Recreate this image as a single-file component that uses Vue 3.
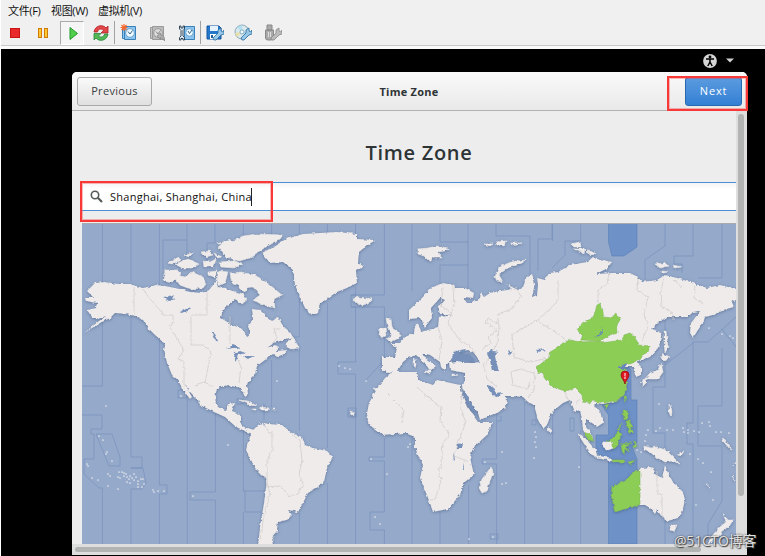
<script setup>
const zoneLines = [
  'M102.4 223V386H82M82 415H102V429H91V434H94V459H84V474L99 488H102.4V544',
  'M131 223V282M131 316V457H142V468H131M131 489V544M131 468H143L146 483L142 489H131',
  'M96 434H112L120 457V466H109Z',
  'M159.4 223V285M159.4 337V485H167V494H159.4V544',
  'M187 223V262M163 269V240H187M178 390H187V398H178Z M187.3 399V544',
  'M215 223V243H207V262M215.4 414V492H190V500H215.4V544',
  'M243.4 223V236M243.4 430V491H266M245 491V512H264M243.4 512V544M237 399H243V404H237Z',
  'M271.6 223V235M271.6 360V407M264 404V420',
  'M299.4 223V234M299.4 299V337H293M299.4 349V431M299.4 513V544',
  'M327.4 223V232M327.4 303V448M327.4 483V544',
  'M355.6 223V234M355.6 287V295H351V307H355.6V362H338V374H355.6V544M348 408H356V417H348Z',
  'M384.4 223V295H351M351 307H384.4V360L365 381M384.4 438V457H369V461H384.4V512H370V530H384.4V544',
  'M412 223V291M412 436V544M440 223V242H468M468 223V294M440 285V265H468M440 512V544',
  'M468.6 485V544M496.6 412V421H501V416M496.6 421V459H482V464H496.6V544M490 534H498V539H490Z',
  'M496 223V236H530V275M538 271V239H552V223M524.6 402V544M532 420H536V425H532Z',
  'M580.6 223V241H565V255L552 268M552.6 223V241M552.6 415V544M580.6 430V544M570 418H574V431H570Z',
  'M665 223V246L645 260V282M693 223V256H674V264H682V273M722 223V278H698',
  'M665 318V387H653V433H665V451M693 342V423H687V444H693V544M693 342H708L736 317',
  'M722 329L736 347M722 348V406H698V446H722V501L708 524V544M665 365L693 343M665 521V544'
]

const zoneBorders = [
  'M134 287V315M143 289L150 299L160 310L163 315H173V323L169 326L176 337L184 350L178 359L184 361V387M207 291V315H191V345H204L211 352L205 383M230 317V344M236 355L241 367L239 383M195 385L204 382L213 386M272 344L277 338L274 329H280',
  'M264 426L269 432H272V451L267 461V481M266 487L280 486L289 496L298 494L303 484L299 474L302 461L300 440L292 435M267 481L270 494L263 520L261 541',
  'M443 287L441 306L453 314M453 285L454 306L448 323L458 338L470 347L475 353M438 327L442 342L439 360M515 287L521 296L510 310L497 314L499 325L488 318L486 322L497 330L489 337L491 344L482 349M499 325L498 342L485 365M537 321L558 301V280M537 320L512 335L514 357L530 362L548 358M539 322L560 335L568 342M535 374L521 369L511 372L513 385L528 389L530 379',
  'M386 392L404 410L402 423M417 387L428 397L441 407L440 422L450 434L443 443L441 463L438 476L442 478M462 387L461 411L466 422L459 440L454 456L469 462M442 478L435 499L430 500M483 363L487 379L497 387M535 374L534 390L528 398',
  'M609 273L607 284L598 290V303M638 277L637 290L648 297L644 314L648 326L642 341M664 277L661 292L662 307L673 313V319M695 285L694 298L703 304M657 471V494H662V517M674 279L681 287M564 391L570 403M580 399L576 404'
]

const continents = [
  'M87 291L95 283L105 282L118 284L130 284L143 288L156 285L165 286L180 289L190 292L202 293L209 290L213 285L216 280L218 287L225 288L235 292L236 298L228 305L222 312L221 318L232 325L243 329L247 337L250 335L248 326L253 320L252 309L260 310L267 317L272 321L278 317L283 326L290 332L293 337L283 340L274 343L267 348L275 345L279 347L276 351L287 350L284 354L277 357L273 354L265 360L257 366L255 375L248 382L247 385L248 394L245 396L241 388L228 385L217 388L215 398L218 407L225 411L228 404L235 403L232 411L240 414L240 423L244 427L253 430L252 434L245 431L236 427L225 417L214 412L200 405L198 400L190 392L184 383L192 397L190 399L183 390L178 380L172 375L167 363L164 350L165 344L155 335L148 328L143 320L135 316L125 314L115 313L110 318L100 323L84 333L99 321L106 316L98 319L92 317L87 310L96 308L97 303L86 301L85 298L94 298Z',
  'M252 431L258 425L263 422L268 424L282 425L292 433L302 437L305 445L313 448L327 451L333 457L327 468L324 482L318 487L308 493L303 503L298 512L288 510L292 515L287 520L278 522L277 531L272 537L273 546H258L260 527L264 503L267 480L255 468L246 450L248 442Z',
  'M262 253L273 247L286 239L303 234L337 232L357 234L357 239L375 240L367 246L359 252L358 263L363 267L356 271L357 283L347 288L337 292L328 298L320 303L318 313L312 315L305 308L300 297L295 285L293 270L283 262L270 263L265 257Z',
  'M443 283L453 285L455 288L465 288L474 293L473 298L463 297L467 303L473 303L480 298L481 293L484 297L490 293L500 291L512 289L506 284L518 290L524 286L525 278L532 274L535 283L532 297L537 295L538 285L537 278L545 280L549 273L558 272L570 265L587 262L593 257L600 260L611 263L608 268L596 274L613 273L630 273L638 277L642 282L657 280L665 275L677 278L693 283L707 288L720 285L736 289V300L732 302L734 307L723 310L713 315L705 317L703 323L698 330L693 338L690 333L691 323L700 311L693 312L688 317L667 317L658 323L652 329L660 332L662 338L658 348L650 357L638 362L641 368V375L636 377L633 367L618 367L627 370L623 373L627 382L624 395L613 402L603 404L597 403L594 406L602 414L603 423L597 427L592 423L586 419V427L592 435L594 441L588 438L583 430L582 420L580 410L575 412L570 400L563 403L552 412L547 425L543 429L538 420L534 405L528 402L523 397L512 396L503 396L508 402L503 410L480 420L478 413L463 390L462 387L465 380V373L450 370L449 363L457 362L472 363L480 362L475 354L468 350L460 352L455 352L451 361L446 365V372L441 367L440 362L430 355L422 353L424 357L436 366L430 371L425 363L416 355L408 358L403 362L397 372L387 373L382 370V357L395 357L397 348L390 343L400 343L405 337L414 333L415 325L418 323L421 332L438 327L439 317L453 315L440 314L438 307L445 300L440 298L431 308L432 318L425 327L420 318L409 319L409 310L422 298L432 287Z',
  'M385 378L393 372L417 372L419 380L433 385L437 380L460 385L460 390L467 407L478 422L493 422L487 435L473 448L470 457L474 475L463 483L460 495L448 509L433 512L428 498L420 478L423 465L415 448V437L405 433L383 435L372 427L368 422L367 413L369 403L378 387Z',
  'M638 472L642 468L650 467L655 468L653 473L662 478L665 465L668 473L673 482L683 492L685 500L682 513L678 518L668 521L662 517L657 510L655 514L650 508L645 505L638 505Z'
]

const islands = [
  'M218 247L225 242L235 240L243 236L257 234L283 235L280 239L266 247L258 252L250 258L239 261L226 257Z',
  'M230 273L241 272L255 275L270 285L282 295L274 299L275 308L263 305L253 300L260 295L253 287L243 288L232 283Z',
  'M177 275L185 277L192 272L203 277L206 284L203 288L190 289L180 285L176 280Z',
  'M165 270L177 270L181 274L173 282L163 280Z M175 264L188 259L199 264L194 268L182 268Z M168 263L179 257L181 260L172 264Z M184 255L193 253L189 257Z',
  'M201 252L209 251L213 255L206 257Z M203 261L210 262L216 259L214 266L204 266Z M208 272L217 271L215 277L208 275Z M219 271L228 272L225 283L219 286L216 280Z M219 262L235 261L243 264L234 268L221 267Z M214 253L222 257L217 258Z M217 244L231 240L228 244Z M233 291L243 294L247 300L242 304L235 299Z M237 284L248 286L245 292L240 289Z',
  'M353 299L358 297L365 298L372 299L368 304L362 306L356 303Z',
  'M287 341L293 337L299 348L292 349L287 347Z',
  'M386 318L391 319L392 327L399 332L401 337L391 342L387 339L392 335L388 329Z M380 329L386 328L387 335L382 338L379 334Z',
  'M418 249L428 248L437 246L448 248L445 251L437 252L442 257L435 257L429 261L424 256L418 254Z',
  'M495 277L499 267L511 262L526 260L522 263L506 269L499 275L503 282L497 281Z',
  'M484 244L493 244L490 246Z M496 242L506 241L504 246L497 245Z M510 243L522 243L512 245Z M571 244L580 242L581 247L574 247Z M574 249L585 249L584 253Z M586 251L595 252L592 255Z M655 264L664 263L669 266L660 268Z M673 265L681 267L674 268Z M662 271L668 272L662 273Z',
  'M664 331L666 331L668 347L665 353L664 340Z M663 354L670 357L664 361L661 358Z M661 363L663 372L658 379L647 379L641 383L650 373L658 370Z M643 379L647 382L643 386Z',
  'M239 400L248 401L257 406L250 405L244 402Z M260 407L269 408L268 410L260 410Z M252 409H256V410H252Z M273 409H276V410H273Z',
  'M491 467L493 472L487 491L482 493L479 488L482 479Z M549 426L552 431L550 433L548 430Z',
  'M578 434L585 438L596 451L597 457L591 454Z M597 456L611 458L612 461L597 458Z M603 442L613 442L614 448L608 450L602 446Z',
  'M644 446L651 448L656 447L666 450L672 456L680 464L673 461L665 462L656 457L650 452L644 449Z M677 454L684 451L681 456Z',
  'M670 525L677 525L674 532L671 530Z M723 513L728 520L733 520L729 527L722 531L720 535L713 541L708 544L711 537L720 527L726 522Z M723 438L732 450L730 449L722 440Z M706 483L711 487L708 486Z M732 476L735 481Z M736 462L734 466Z',
  'M669 404L672 411L671 417L669 412Z M373 388L379 389L376 391Z M350 411L355 413L353 416Z M415 359L416 364L415 368L413 366V361Z M425 371L431 371L430 374Z M452 374L458 375L452 376Z'
]

const waters = [
  'M451 360L454 352L458 350L462 355L469 354L475 360L465 363L457 362Z M490 350L498 352L495 356L496 361L499 371L492 371L490 360L487 354Z M460 350L466 349L463 354Z',
  'M163 298L170 297L174 295L172 299L177 298L170 301Z M180 312L186 309L193 308L188 311L181 313Z M212 332L215 334L218 340L216 341Z M226 349L233 345L240 348L234 348Z M235 352L241 351L245 353L238 355L236 361L234 358Z M243 356L254 356L248 359Z',
  'M463 389L466 393L473 407L478 417L472 411L467 403Z M488 385L492 386L496 393L503 392L499 397L493 396L488 389Z M458 444L462 443L461 448L457 448Z M453 452L455 459L454 461Z M463 462L464 470L463 470Z',
  'M536 350L546 349V350L538 352Z M508 350L512 352L510 356Z M263 422L265 423L264 427Z'
]

const greenLand = [
  'M537 367L542 363L548 358L550 352L557 348L563 343L570 340L581 342L600 341L602 343L622 340L624 335L630 333L635 337L638 345L650 346L648 352L642 355L640 360L630 364L623 364L618 367L627 369L622 373L627 382L626 388L624 395L617 400L605 403L593 401L588 403L583 402L582 395L575 388L565 391L553 387L545 379L543 373L538 372Z',
  'M577 330L582 323L593 318L597 305L601 303L604 317L612 318L615 314L621 318L617 325L618 332L610 335L600 341L582 340L582 335Z',
  'M640 471L636 470L629 477L624 481L612 487L611 495L615 512L632 507L640 504Z',
  'M623 410L627 410L628 418L624 420Z M626 421L629 421L633 427H629L634 430L633 433L629 432Z',
  'M604 405L608 404L606 409Z M624 396L627 397L625 403Z',
  'M585 432L591 435L594 441L588 440Z M607 441L614 437L618 432L622 434L619 440L617 446L613 450L613 443Z',
  'M621 444L632 443L625 446L629 452L625 449L624 455L622 451Z M634 440L637 446L634 448Z M611 460L625 460V462L612 462Z M628 462L636 460L630 464Z M617 430L622 423L618 431Z'
]

const dots = [[99,436],[103,440],[107,452],[106,454],[112,461],[87,464],[88,466],[92,478],[98,480],[108,474],[110,476],[118,477],[120,478],[108,486],[118,489],[106,406],[119,472],[122,472],[124,473],[126,474],[124,476],[127,477],[130,476],[132,478],[129,479],[134,474],[136,477],[134,480],[138,481],[141,479],[138,484],[143,479],[144,484],[142,487],[138,487],[127,482],[130,483],[153,490],[154,492],[158,491],[164,491],[193,496],[228,445],[181,396],[339,366],[345,368],[350,369],[277,381],[366,381],[371,459],[387,474],[375,517],[380,524],[410,444],[408,447],[485,462],[502,452],[502,484],[506,483],[493,537],[469,539],[534,458],[535,432],[536,437],[535,442],[536,447],[579,467],[550,430],[648,430],[656,431],[660,428],[667,430],[673,430],[683,428],[688,433],[694,431],[699,432],[702,423],[709,422],[710,426],[716,432],[721,432],[729,433],[646,435],[645,441],[659,404],[671,406],[671,415],[722,334],[730,336],[733,338],[709,328],[713,500],[696,505],[711,472],[698,459],[703,463],[690,454],[688,430],[684,432],[637,450],[641,452]]

const tools = ['stop', 'pause', 'play', 'reset', 'snapshot', 'revert', 'manager', 'disk', 'cd', 'usb']
</script>

<template>
  <div class="screen">
    <header class="host">
      <nav class="menu">
        <span class="m1">文件(F)</span><span class="m2">视图(W)</span><span class="m3">虚拟机(V)</span>
      </nav>
      <div class="tools">
        <div v-for="t in tools" :key="t" class="tool" :class="t">
          <svg width="18" height="18" viewBox="0 0 18 18">
            <rect v-if="t === 'stop'" x="4.5" y="4.5" width="9" height="9" fill="#e92a2a" stroke="#c81414" />
            <g v-else-if="t === 'pause'" fill="#ffc832" stroke="#d07a08">
              <rect x="3.500" y="4.500" width="3" height="9" /><rect x="9.500" y="4.500" width="3" height="9" />
            </g>
            <path v-else-if="t === 'play'" d="M6 3.500L13.500 9.500L6 15.500Z" fill="#52cf4c" stroke="#239a2c" />
            <g v-else-if="t === 'reset'">
              <path d="M2 8C3 1 11 0 14 4L16 2V9H9L11.500 6.500C9 4 6 5 5.500 8Z" fill="#e34646" stroke="#ae2027" stroke-width=".8" />
              <path d="M16 10C15 17 7 18 4 14L2 16V9.500H9L6.500 12C9 14 12 13 12.500 10Z" fill="#54b955" stroke="#24843a" stroke-width=".8" />
            </g>
            <g v-else-if="t === 'snapshot' || t === 'revert'">
              <path d="M2.500 3.500H13.500V14.500H2.500Z" :fill="t === 'revert' ? '#c4c4c4' : '#8fc5ed'" :stroke="t === 'revert' ? '#999' : '#3981b8'" />
              <path d="M4.500 2.500H15.500V15.500H4.500Z" :fill="t === 'revert' ? '#bbb' : '#8cc4ed'" :stroke="t === 'revert' ? '#999' : '#3981b8'" />
              <circle cx="10" cy="9" r="4.300" :fill="t === 'revert' ? '#ddd' : '#edf8ff'" :stroke="t === 'revert' ? '#999' : '#6aa8d4'" />
              <path d="M8 7.500L10 10L12.500 6.500" fill="none" :stroke="t === 'revert' ? '#888' : '#356688'" />
              <path v-if="t === 'snapshot'" d="M4 0V7M.5 3.500H7.500M1.500 1L6.500 6M6.500 1L1.500 6" stroke="#f8672c" stroke-width="1.100" />
              <path v-else d="M9 12L12.500 9V11Q17 11 16.500 17Q15 13.500 12.500 13.500V15.500Z" fill="#b0b0b0" stroke="#868686" stroke-width=".8" />
            </g>
            <g v-else-if="t === 'manager'">
              <path d="M6.500 2.500H16.500V15.500H6.500Z" fill="#8cc4ed" stroke="#3981b8" />
              <circle cx="11.500" cy="8.500" r="3.800" fill="#edf8ff" stroke="#6aa8d4" />
              <path d="M10 7L11.500 9.500L14 6" fill="none" stroke="#356688" />
              <path d="M1.500 2V5L3 6.500V12L1.500 13.500V16H3V14.500H5V16H6.500V13.500L5 12V6.500L6.500 5V2H5V4H3V2Z" fill="#dce8f1" stroke="#24394a" stroke-width=".9" />
            </g>
            <g v-else>
              <g v-if="t === 'disk'">
                <path d="M1 2H13L15 4V15H1Z" fill="#2477ca" stroke="#1757a0" />
                <path d="M4 2H12V7H4Z" fill="#e4f2ff" /><path d="M4 10H12V15H4Z" fill="#fff" /><path d="M5 11H7V14H5Z" fill="#225d9d" />
              </g>
              <g v-else-if="t === 'cd'">
                <circle cx="8" cy="8" r="7" fill="#d9e8ed" stroke="#8aa8b6" /><path d="M8 8L3 3L8 1ZM8 8L14 8L12 13Z" fill="#b1dff0" />
                <path d="M8 8L1 9L3 13Z" fill="#ecdfa6" /><circle cx="8" cy="8" r="2" fill="#fff" stroke="#7eabc2" />
              </g>
              <g v-else fill="#aaa" stroke="#888">
                <path d="M3 1H8V6H3ZM1.500 6H9.500V14Q9.500 16 7 16H4Q1.500 16 1.500 14Z" /><path d="M4.500 8V13M6.500 8V13" stroke="#ddd" />
              </g>
              <path d="M8 16L7 14L12 9V6L15 4V7L17 8L18 6V10L15 11L10 16Z" :fill="t === 'usb' ? '#bbb' : '#99c7e8'" :stroke="t === 'usb' ? '#888' : '#286c9e'" stroke-width=".8" />
            </g>
          </svg>
        </div>
      </div>
    </header>

    <main class="guest">
      <div class="tray">
        <svg width="14" height="14" viewBox="0 0 14 14">
          <circle cx="7" cy="7" r="6.900" fill="#d5d5d5" /><circle cx="7" cy="3" r="1.400" />
          <path d="M3 5H11M7 5V8.500M7 8L4.800 12M7 8L9.200 12" stroke="#000" stroke-width="1.500" fill="none" />
        </svg>
        <svg width="8" height="5" viewBox="0 0 8 5"><path d="M0 .5H8L4 4.500Z" fill="#d2d2d2" /></svg>
      </div>
      <section class="window">
        <div class="headerbar">
          <button class="btn prev">Previous</button>
          <span class="caption">Time Zone</span>
          <button class="btn next">Next</button>
        </div>
        <div class="body">
          <div class="page">
            <h1>Time Zone</h1>
            <div class="entry">
              <svg width="13" height="13" viewBox="0 0 13 13" fill="none" stroke="#555b5b">
                <circle cx="5" cy="5" r="3.700" stroke-width="1.600" /><path d="M7.800 7.800L12 12" stroke-width="2.200" />
              </svg>
              <span>Shanghai, Shanghai, China</span><i class="caret"></i>
            </div>
            <svg class="map" width="654" height="321" viewBox="82 223 654 321">
              <defs>
                <filter id="coast" x="-5%" y="-5%" width="110%" height="110%" color-interpolation-filters="sRGB">
                  <feTurbulence type="fractalNoise" baseFrequency=".25" numOctaves="2" seed="4" result="n" />
                  <feDisplacementMap in="SourceGraphic" in2="n" scale="3.400" xChannelSelector="R" yChannelSelector="G" result="land" />
                  <feGaussianBlur in="land" stdDeviation=".25" result="soft" />
                  <feDropShadow in="soft" dx="0" dy=".8" stdDeviation="1.400" flood-color="#40577d" flood-opacity=".6" />
                </filter>
              </defs>
              <rect x="82" y="223" width="654" height="321" fill="#95a9ca" />
              <g fill="#6e91c8" stroke="#5b7fb5" stroke-width=".6">
                <path d="M608.500 223H637V247L624 256H612L608.500 242Z" />
                <path d="M627 365L631 370V400H637V442L632 447L637 459V544H608.500V461L596 452V435H608.500V415L602 405L620 401L626 390Z" />
              </g>
              <g class="zones"><path v-for="(d, i) in zoneLines" :key="i" :d="d" /></g>
              <g filter="url(#coast)">
                <g fill="#eeebea">
                  <path v-for="(d, i) in continents" :key="'c' + i" :d="d" />
                  <path v-for="(d, i) in islands" :key="'i' + i" :d="d" stroke="#eeebea" stroke-width=".6" />
                </g>
                <g class="borders"><path v-for="(d, i) in zoneBorders" :key="i" :d="d" /></g>
                <g fill="#7690ba"><path v-for="(d, i) in waters" :key="i" :d="d" /></g>
                <g class="green"><path v-for="(d, i) in greenLand" :key="i" :d="d" /></g>
                <path d="M594 338Q601 334 603 327Q603 333 598 337Z M618 367L623 364H627L625 367L628 369L623 370Z" fill="#6685b9" />
              </g>
              <circle v-for="(p, i) in dots" :key="i" :cx="p[0]" :cy="p[1]" r=".85" fill="#e4e6ec" />
              <path d="M625 384C624 380 621 378 621 375A4 4 0 0 1 629 375C629 378 626 380 625 384Z" fill="#df1720" stroke="#8e1519" stroke-width=".8" />
              <path d="M625 373V376.500M624 378H626" stroke="#fff" stroke-width="1" />
              <path d="M82 223.500H736" stroke="#a8aaae" />
            </svg>
          </div>
          <div class="vtrack"><div class="vthumb"></div></div>
        </div>
        <div class="htrack"><div class="hthumb"></div></div>
      </section>
    </main>
    <div class="mark mark-next"></div>
    <div class="mark mark-entry"></div>
    <div class="watermark">@51CTO博客</div>
  </div>
</template>

<style>
body { margin: 0; overflow: hidden; background: #fff; }
</style>

<style scoped>
* { box-sizing: border-box; }
.screen { position: relative; width: 765px; height: 556px; padding-left: 1px; overflow: hidden; font-family: "Open Sans", "Noto Sans CJK SC", sans-serif; }
svg { display: block; flex: none; }
.host { height: 49px; background: #f0f0f0; border-bottom: 3px solid #fafafa; box-shadow: inset 0 -1px #c9c9c9; }
.menu { display: flex; height: 21px; padding-left: 7px; font-size: 11px; line-height: 21px; color: #111; white-space: nowrap; letter-spacing: -.35px; }
.m1 { width: 43px; }
.m2 { width: 47px; }
.tools { display: grid; grid-template-columns: repeat(10, 28.6px); height: 24px; }
.tool { display: flex; align-items: center; justify-content: center; }
.tool.play svg { margin-left: 1px; }
.tool.play { width: 24px; margin-left: 2px; border: 1px solid #a9a9a9; border-right-color: #fff; border-bottom-color: #fff; background: #f5f5f5; }
.tool.snapshot, .tool.disk { border-left: 1px solid #a2a2a2; margin: 0 0 1px -1px; }
.tool.snapshot svg, .tool.revert svg, .tool.cd svg { margin-left: -2px; }
.guest { height: 507px; background: #000; }
.tray { display: flex; align-items: center; gap: 9px; height: 23px; padding-left: 702px; }
.window { width: 675px; height: 483px; margin-left: 71px; background: #ededed; border-radius: 5px 5px 0 0; overflow: hidden; }
.headerbar { display: grid; grid-template-columns: 75px 1fr 57px; align-items: center; height: 39px; padding: 0 5px; background: linear-gradient(#fafafa, #e9e9e9); border-bottom: 1px solid #b2b2b2; }
.btn { height: 29px; padding: 0 0 1px; border: 1px solid #a8a8a8; border-radius: 3px; font-family: "Open Sans", sans-serif; font-size: 11px; letter-spacing: .3px; color: #3b4142; background: linear-gradient(#fafafa, #e0e0e0); }
.next { color: #fff; border-color: #2868ac; background: linear-gradient(#5b9bdf, #3480d5); letter-spacing: .8px; }
.caption { padding-right: 19px; text-align: center; font-size: 11px; font-weight: 700; letter-spacing: .25px; color: #2e3436; white-space: nowrap; }
.body { display: flex; height: 433px; }
.page { width: 664px; padding-left: 10px; }
h1 { margin: 0; height: 71px; padding: 26px 0 0 20px; font-size: 20px; line-height: 32px; font-weight: 600; letter-spacing: .7px; text-align: center; color: #2e3436; }
.entry { display: flex; align-items: center; width: 654px; height: 29px; padding-left: 8px; margin-bottom: 12px; border-top: 1px solid #4a90d9; border-bottom: 1px solid #4a90d9; background: linear-gradient(#f4f4f4, #fff 6px); font-size: 11px; letter-spacing: .27px; color: #111; white-space: nowrap; }
.entry span { margin-left: 7px; }
.caret { width: 1px; height: 18px; margin-left: -1px; background: #222; }
.zones path { fill: none; stroke: #718bb7; stroke-width: .8; stroke-opacity: .7; }
.borders path { fill: none; stroke: #d0cdcd; stroke-width: .8; stroke-linejoin: round; }
.green path { fill: #8ccd56; stroke: #82b75d; stroke-width: .6; }
.vtrack { width: 11px; padding: 3px 3px 0 2px; background: #dedede; }
.vthumb { height: 382px; border-radius: 3px; background: #b2b4b4; }
.htrack { height: 11px; padding: 3px 0 0 3px; background: #dedede; }
.hthumb { width: 626px; height: 5px; border-radius: 3px; background: #b2b4b4; }
.mark { position: absolute; border: 2px solid #f93838; box-shadow: inset 0 0 0 1px rgba(249, 56, 56, .35); }
.mark-next { left: 667px; top: 76px; width: 81px; height: 35px; }
.mark-entry { left: 80px; top: 181px; width: 193px; height: 41px; }
.watermark { position: absolute; left: 674px; top: 531px; font-size: 14px; line-height: 20px; letter-spacing: -.2px; color: #e2e2e2; text-shadow: 0 0 2px #333, 1px 1px 1px #444; white-space: nowrap; }
</style>
